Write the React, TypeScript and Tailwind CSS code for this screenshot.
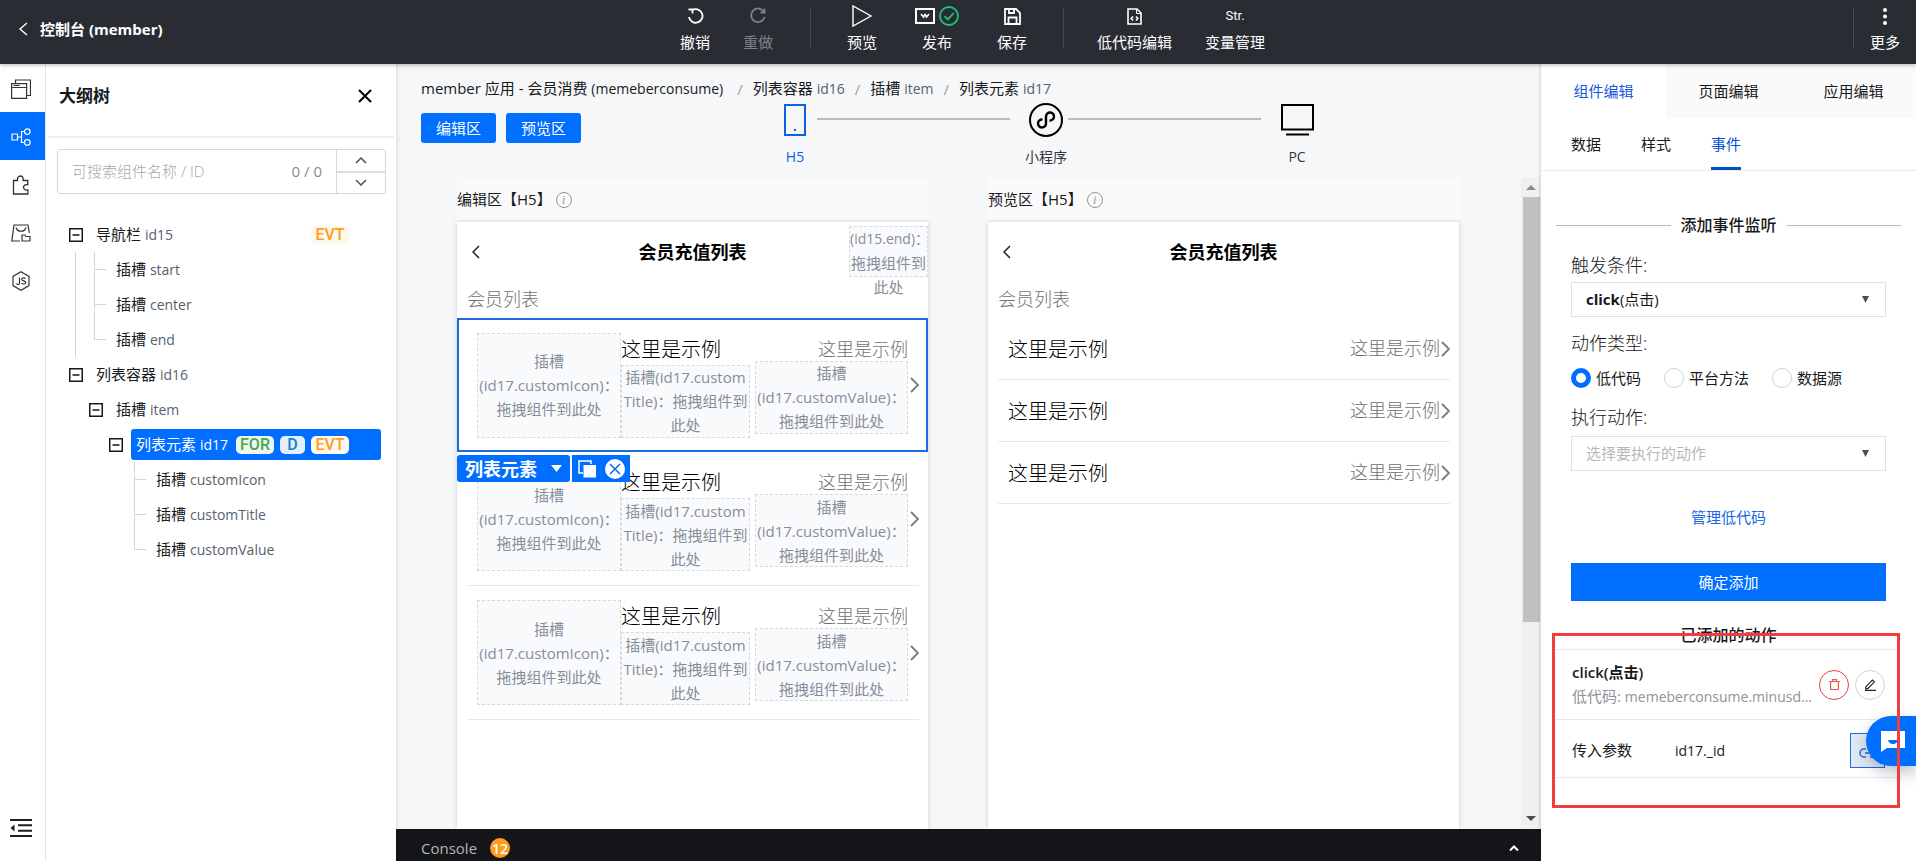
import React from 'react';
import clsx from 'clsx';

type GuideCell = 'blank' | 'line' | 'tee' | 'elbow' | 'toggle';

interface TreeRow {
  cells: GuideCell[];
  name: string;
  id: string;
  badges?: string[];
  selected?: boolean;
}

const TREE: TreeRow[] = [
  { cells: ['toggle'], name: '导航栏', id: 'id15', badges: ['EVT'] },
  { cells: ['line', 'tee'], name: '插槽', id: 'start' },
  { cells: ['line', 'tee'], name: '插槽', id: 'center' },
  { cells: ['line', 'elbow'], name: '插槽', id: 'end' },
  { cells: ['toggle'], name: '列表容器', id: 'id16' },
  { cells: ['blank', 'toggle'], name: '插槽', id: 'item' },
  { cells: ['blank', 'blank', 'toggle'], name: '列表元素', id: 'id17', badges: ['FOR', 'D', 'EVT'], selected: true },
  { cells: ['blank', 'blank', 'blank', 'tee'], name: '插槽', id: 'customIcon' },
  { cells: ['blank', 'blank', 'blank', 'tee'], name: '插槽', id: 'customTitle' },
  { cells: ['blank', 'blank', 'blank', 'elbow'], name: '插槽', id: 'customValue' },
];

const Svg: React.FC<React.SVGProps<SVGSVGElement>> = ({ children, ...props }) => (
  <svg fill="none" stroke="currentColor" strokeWidth="1.5" aria-hidden="true" {...props}>
    {children}
  </svg>
);

/* ---------- top bar ---------- */

interface ToolProps {
  label: string;
  className?: string;
  children: React.ReactNode;
}

const Tool: React.FC<ToolProps> = ({ label, className, children }) => (
  <button type="button" className={clsx('flex flex-col items-center text-[15px] leading-5', className)}>
    <span className="flex h-8 items-center justify-center gap-1">{children}</span>
    <span className="whitespace-nowrap">{label}</span>
  </button>
);

const TopBar: React.FC = () => (
  <header className="relative z-20 flex h-16 shrink-0 items-start bg-[#2a2c34] text-white shadow-[0_1px_4px_rgba(0,0,0,0.3)]">
    <a href="#console" className="flex w-[680px] items-center gap-3 pt-[19px] pl-[18px] text-[15px] leading-5 font-bold">
      <Svg width="10" height="14" viewBox="0 0 10 14" strokeWidth="1.4">
        <path d="M9 1 2 7l7 6" />
      </Svg>
      控制台 (member)
    </a>
    <Tool label="撤销">
      <Svg width="18" height="18" viewBox="0 0 18 18" strokeWidth="1.8">
        <path d="M2.5 2.5h4v4" />
        <path d="M6 3.2A6.8 6.8 0 1 1 3 10" />
      </Svg>
    </Tool>
    <Tool label="重做" className="ml-[33px] text-[#7f8187]">
      <Svg width="18" height="18" viewBox="0 0 18 18" strokeWidth="1.8">
        <path d="M15.5 1.5v4h-4" />
        <path d="M15 5A6.8 6.8 0 1 0 15.6 10" />
      </Svg>
    </Tool>
    <span className="mt-2 ml-[37px] h-10 w-px bg-[#44464e]" />
    <Tool label="预览" className="ml-9">
      <Svg width="20" height="22" viewBox="0 0 20 22" strokeWidth="1.4">
        <path d="M1 1v20l18-10z" />
      </Svg>
    </Tool>
    <Tool label="发布" className="ml-9 w-12">
      <Svg width="20" height="16" viewBox="0 0 20 16" strokeWidth="2">
        <path d="M1 1h18v14H1z" />
        <path d="M6 6l2.5 3L10 6.5 11.5 9 14 6" strokeWidth="1.6" />
      </Svg>
      <Svg width="20" height="20" viewBox="0 0 20 20" stroke="#1fc173" strokeWidth="1.8">
        <circle cx="10" cy="10" r="9" />
        <path d="M5.5 10.2l3.3 3.2 6-6.4" />
      </Svg>
    </Tool>
    <Tool label="保存" className="ml-9">
      <Svg width="17" height="17" viewBox="0 0 17 17" strokeWidth="1.8">
        <path d="M1 1h11l4 4v11H1z" />
        <path d="M4.5 16V9.500h8V16M5 1v4h5V1" />
      </Svg>
    </Tool>
    <span className="mt-2 ml-9 h-10 w-px bg-[#44464e]" />
    <Tool label="低代码编辑" className="ml-[33px]">
      <Svg width="15" height="17" viewBox="0 0 15 17" strokeWidth="1.6">
        <path d="M1 1h9l4 4v11H1z" />
        <path d="M9.500 1v4.500H14" strokeWidth="1" />
        <path d="M6 8.500 4.200 10.500 6 12.500M9 8.500l1.800 2L9 12.500" />
      </Svg>
    </Tool>
    <Tool label="变量管理" className="ml-[33px]">
      <span className="font-['Roboto',sans-serif] text-[13px]">Str.</span>
    </Tool>
    <span className="mt-2 ml-auto h-10 w-px bg-[#4b4d54]" />
    <Tool label="更多" className="mr-4 ml-4">
      <svg width="4" height="17" viewBox="0 0 4 17" fill="currentColor" aria-hidden="true">
        <circle cx="2" cy="2" r="2" />
        <circle cx="2" cy="8.500" r="2" />
        <circle cx="2" cy="15" r="2" />
      </svg>
    </Tool>
  </header>
);

/* ---------- left side ---------- */

const RailButton: React.FC<{ label: string; active?: boolean; children: React.ReactNode }> = ({
  label,
  active,
  children,
}) => (
  <button
    type="button"
    aria-label={label}
    className={clsx(
      'flex h-12 w-full items-center justify-center pt-[2px] pr-1',
      active ? 'bg-[#006eff] text-white' : 'text-[#2f3238]',
    )}
  >
    {children}
  </button>
);

const Rail: React.FC = () => (
  <nav className="flex w-[46px] shrink-0 flex-col border-r border-[#e4e6e9] bg-white">
    <RailButton label="页面">
      <Svg width="20" height="20" viewBox="0 0 20 20" strokeWidth="1.200">
        <path d="M4.500 4V1h15v15.500H16M.6 4.600h15v14.800H.6z" />
        <path d="M.6 8.500h15M2.500 6.500h6" />
      </Svg>
    </RailButton>
    <RailButton label="大纲树" active>
      <Svg width="20" height="18" viewBox="0 0 20 18" strokeWidth="1.200">
        <path d="M1 6h5.500v6H1zM6.500 9h4M13.500 3.500h-3v11h3" />
        <circle cx="16.300" cy="3.600" r="2.800" />
        <circle cx="16.300" cy="14.400" r="2.800" />
      </Svg>
    </RailButton>
    <RailButton label="组件">
      <Svg width="18" height="20" viewBox="0 0 18 20" strokeWidth="1.300">
        <path d="M1.500 5.500h4c-.3-2.800.8-4.500 2.800-4.500s3.200 1.700 2.900 4.500h4.600v4.200c-2.600-.4-4.300.7-4.300 2.600s1.700 3 4.300 2.700V19H1.500z" />
      </Svg>
    </RailButton>
    <RailButton label="资源">
      <Svg width="20" height="18" viewBox="0 0 20 18" strokeWidth="1.200">
        <path d="M9 17H.8L3 1h14l1.300 8M11 17v-6h3l1 1.500h4V17z" />
        <path d="M5 3.500c1.500 5 8.500 5 10 0" />
      </Svg>
    </RailButton>
    <RailButton label="脚本">
      <Svg width="18" height="20" viewBox="0 0 18 20" strokeWidth="1.200">
        <path d="M9 .8l8 4.600v9.200l-8 4.600-8-4.600V5.400z" />
        <path d="M7.500 6.500v5.700c0 1.500-2.500 1.600-3.500.3M13.500 7.600c-1-1.200-3.800-1-3.800.7 0 2 4 1 4 3.100 0 2-3.300 2-4.200.6" />
      </Svg>
    </RailButton>
    <button type="button" aria-label="收起" className="mt-auto mb-[23px] flex justify-center pr-1 text-[#1d1f24]">
      <Svg width="22" height="20" viewBox="0 0 22 20" strokeWidth="2">
        <path d="M0 2h22M8 7.300h14M8 12.700h14M0 18h22" />
        <path d="M4.500 6.500v7L.5 10z" fill="currentColor" stroke="none" />
      </Svg>
    </button>
  </nav>
);

const Guide: React.FC<{ kind: GuideCell }> = ({ kind }) => {
  if (kind === 'toggle') {
    return (
      <button type="button" aria-label="折叠" className="flex w-5 items-center justify-center text-[#17191d]">
        <Svg width="14" height="14" viewBox="0 0 14 14">
          <path d="M.75.75h12.500v12.500H.75zM3.500 7h7" />
        </Svg>
      </button>
    );
  }
  return (
    <span className="flex w-5">
      {kind !== 'blank' && (
        <span className={clsx('w-[10px] border-r border-[#d3d5d9]', kind === 'elbow' ? 'h-1/2' : 'h-full')} />
      )}
      {(kind === 'tee' || kind === 'elbow') && <span className="h-1/2 w-[11px] shrink-0 border-b border-[#d3d5d9]" />}
    </span>
  );
};

const badgeStyles: Record<string, string> = {
  FOR: 'w-[38px] bg-[#eef8ee] text-[#4ba552]',
  D: 'w-[25px] bg-[#e3f0fb] text-[#1a7fd0]',
  EVT: 'w-[38px] bg-[#fff8ec] text-[#ff9d1e]',
};

const Badge: React.FC<{ text: string }> = ({ text }) => (
  <span
    className={clsx(
      "flex h-[18px] items-center justify-center rounded-[5px] font-['Roboto',sans-serif] text-[16px] leading-4 font-medium",
      badgeStyles[text],
    )}
  >
    {text}
  </span>
);

const OutlinePanel: React.FC = () => (
  <aside className="flex w-[350px] shrink-0 flex-col bg-white">
    <div className="mx-[2px] flex h-[74px] items-center justify-between border-b-2 border-[#eff0f2] pr-[22px] pb-2 pl-[11px]">
      <h2 className="text-[17px] font-bold text-[#16181c]">大纲树</h2>
      <button type="button" aria-label="关闭" className="text-black">
        <Svg width="14" height="14" viewBox="0 0 14 14" strokeWidth="2">
          <path d="M1 1l12 12M13 1 1 13" />
        </Svg>
      </button>
    </div>
    <div className="mr-[10px] ml-[11px] mt-[11px] flex h-[45px] rounded-[3px] border border-[#d5d7db]">
      <input
        type="text"
        aria-label="可搜索组件名称 / ID"
        placeholder="可搜索组件名称 / ID"
        className="min-w-0 flex-1 pl-[14px] text-[15px] font-light outline-none placeholder:text-[#a4a8ae]"
      />
      <span className="flex items-center pr-[14px] text-[15px] text-[#888c92]">0 / 0</span>
      <div className="flex w-[49px] flex-col border-l border-[#d5d7db] text-[#4d5157]">
        <button type="button" aria-label="上一个" className="flex flex-1 items-center justify-center border-b-2 border-[#dcdee1]">
          <Svg width="12" height="7" viewBox="0 0 12 7">
            <path d="M1 6l5-5 5 5" />
          </Svg>
        </button>
        <button type="button" aria-label="下一个" className="flex flex-1 items-center justify-center">
          <Svg width="12" height="7" viewBox="0 0 12 7">
            <path d="M1 1l5 5 5-5" />
          </Svg>
        </button>
      </div>
    </div>
    <ul className="mt-[23px] pr-[15px] pl-5 text-[15px]">
      {TREE.map((row) => (
        <li key={row.name + row.id} className="flex h-[35px]">
          {row.cells.map((cell, i) => (
            <Guide key={i} kind={cell} />
          ))}
          <div
            className={clsx(
              'my-[2px] ml-[5px] flex flex-1 items-center rounded-[3px] pl-[5px]',
              row.selected ? 'bg-[#006eff] text-white' : 'text-[#17191d]',
            )}
          >
            <span className="whitespace-nowrap">
              {row.name}{' '}
              <span className={clsx('text-[14px]', row.selected ? 'text-white' : 'text-[#56616f]')}>{row.id}</span>
            </span>
            {row.badges && (
              <span className="mr-8 ml-auto flex gap-[6px]">
                {row.badges.map((b) => (
                  <Badge key={b} text={b} />
                ))}
              </span>
            )}
          </div>
        </li>
      ))}
    </ul>
  </aside>
);

/* ---------- canvas ---------- */

const Crumb: React.FC<{ name: string; id: string }> = ({ name, id }) => (
  <>
    <span className="text-[#9a9ea5]">/</span>
    <a href={'#' + id} className="text-[#17191d]">
      {name} <span className="text-[14px] text-[#56616f]">{id}</span>
    </a>
  </>
);

const Device: React.FC<{ label: string; className: string; children: React.ReactNode }> = ({
  label,
  className,
  children,
}) => (
  <button type="button" className={clsx('flex w-12 flex-col items-center text-[14px] leading-5', className)}>
    <span className="flex h-9 items-center">{children}</span>
    <span className="mt-[9px] whitespace-nowrap">{label}</span>
  </button>
);

const Slot: React.FC<{ lines: string[]; className: string }> = ({ lines, className }) => (
  <div
    className={clsx(
      'flex flex-col items-center justify-center border border-dashed border-[#d6d9de] bg-[#f9fafc] text-[15px] leading-6 whitespace-nowrap text-[#868e9a]',
      className,
    )}
  >
    {lines.map((line) => (
      <span key={line}>{line}</span>
    ))}
  </div>
);

const Chevron: React.FC = () => (
  <Svg width="9" height="16" viewBox="0 0 9 16" stroke="#7b7b7b" strokeWidth="1.800" className="shrink-0">
    <path d="M1 1l7 7-7 7" />
  </Svg>
);

const NavBar: React.FC = () => (
  <div className="flex h-[60px] items-center px-[15px]">
    <button type="button" aria-label="返回" className="w-2 text-[#222]">
      <Svg width="8" height="14" viewBox="0 0 8 14">
        <path d="M7 1 1 7l6 6" />
      </Svg>
    </button>
    <h3 className="flex-1 pr-2 text-center text-[18px] leading-6 font-bold text-black">会员充值列表</h3>
  </div>
);

const ListHeading: React.FC = () => (
  <p className="pt-[5px] pb-[7px] pl-[10px] text-[18px] leading-6 font-light text-[#707070]">会员列表</p>
);

const EditItem: React.FC<{ selected?: boolean }> = ({ selected }) => (
  <div className={clsx('relative', selected && 'z-10')}>
    {selected && <div className="pointer-events-none absolute inset-0 border-2 border-[#1a6be0]" />}
    <div
      className={clsx('mr-[9px] ml-[10px] flex h-[134px] items-center pl-[10px]', !selected && 'border-b border-[#e8e8e8]')}
    >
      <Slot className="h-[105px] w-[144px]" lines={['插槽', '(id17.customIcon)：', '拖拽组件到此处']} />
      <div className="w-[129px]">
        <p className="pt-[2px] text-[20px] leading-[30px] font-light text-black">这里是示例</p>
        <Slot className="h-[73px]" lines={['插槽(id17.custom', 'Title)：拖拽组件到', '此处']} />
      </div>
      <div className="mr-[2px] ml-[5px] w-[153px]">
        <p className="text-right text-[18px] leading-6 font-light text-[#707070]">这里是示例</p>
        <Slot className="h-[73px]" lines={['插槽', '(id17.customValue)：', '拖拽组件到此处']} />
      </div>
      <Chevron />
    </div>
    {selected && (
      <div className="absolute top-full left-0 mt-[3px] flex gap-[2px] text-white">
        <button type="button" className="flex h-[27px] w-[113px] items-center justify-between rounded-[3px] bg-[#006eff] px-2 text-[18px] leading-6 font-bold">
          列表元素
          <svg width="11" height="7" viewBox="0 0 11 7" fill="currentColor" aria-hidden="true">
            <path d="M0 0h11L5.500 7z" />
          </svg>
        </button>
        <div className="flex h-[27px] w-[58px] items-center justify-center gap-2 bg-[#006eff]">
          <button type="button" aria-label="复制">
            <Svg width="19" height="18" viewBox="0 0 19 18">
              <path d="M5 13H1V1h12v3" />
              <path d="M5.500 5H18v12.500H5.500z" fill="currentColor" stroke="none" />
            </Svg>
          </button>
          <button type="button" aria-label="删除">
            <Svg width="20" height="20" viewBox="0 0 20 20">
              <circle cx="10" cy="10" r="10" fill="currentColor" stroke="none" />
              <path d="M5 5l10 10M15 5 5 15" stroke="#006eff" />
            </Svg>
          </button>
        </div>
      </div>
    )}
  </div>
);

const Screen: React.FC<{ title: string; children: React.ReactNode }> = ({ title, children }) => (
  <section className="flex w-[471px] shrink-0 flex-col">
    <div className="flex h-[42px] items-center gap-1 bg-[#fafafa] pt-px text-[15px] text-[#17191d]">
      <h3>{title}</h3>
      <span className="flex h-4 w-4 items-center justify-center rounded-full border border-[#8f9399] font-['Liberation_Serif',serif] text-[12px] leading-3 text-[#8f9399] italic">
        i
      </span>
    </div>
    <div className="mt-[2px] flex-1 overflow-hidden bg-white shadow-[0_0_5px_rgba(0,0,0,0.16)]">{children}</div>
  </section>
);

const Canvas: React.FC = () => (
  <main className="flex min-w-0 flex-1 flex-col bg-[#f5f7f9] shadow-[inset_3px_0_4px_-2px_rgba(0,0,0,0.12)]">
    <div className="flex items-center gap-[10px] pt-3 pl-[25px] text-[15px] leading-6 whitespace-nowrap">
      <a href="#member" className="mr-1 text-[#17191d]">
        member 应用 - 会员消费 <span className="text-[14px]">(memeberconsume)</span>
      </a>
      <Crumb name="列表容器" id="id16" />
      <Crumb name="插槽" id="item" />
      <Crumb name="列表元素" id="id17" />
    </div>
    <div className="flex h-[76px] shrink-0 pl-[25px]">
      <div className="flex gap-[10px] pt-3 text-[15px] text-white">
        <button type="button" className="h-[30px] w-[75px] rounded-[3px] bg-[#006eff]">编辑区</button>
        <button type="button" className="h-[30px] w-[75px] rounded-[3px] bg-[#006eff]">预览区</button>
      </div>
      <div className="ml-[190px] flex items-start pt-px">
        <Device label="H5" className="text-[#0a63e6]">
          <Svg width="22" height="32" viewBox="0 0 22 32" strokeWidth="2">
            <path d="M1 1h20v30H1z" />
            <path d="M10 25h2v2h-2z" fill="currentColor" stroke="none" />
          </Svg>
        </Device>
        <span className="mt-4 mr-3 ml-[-2px] h-[2px] w-[193px] bg-[#b9bbbe]" />
        <Device label="小程序" className="text-[#33363b]">
          <Svg width="34" height="34" viewBox="0 0 34 34" stroke="#000" strokeWidth="2">
            <circle cx="17" cy="17" r="16" />
            <path d="M13.500 16.500a4 4 0 1 0 3.500 4v-7a4 4 0 1 1 3.500 4" strokeWidth="2.400" />
          </Svg>
        </Device>
        <span className="mt-4 mr-3 ml-[-2px] h-[2px] w-[193px] bg-[#b9bbbe]" />
        <Device label="PC" className="text-[#33363b]">
          <Svg width="33" height="32" viewBox="0 0 33 32" stroke="#000" strokeWidth="2">
            <path d="M1 1h31v24.500H1zM5 30.500h23" />
          </Svg>
        </Device>
      </div>
    </div>
    <div className="flex min-h-0 flex-1 justify-between">
      <div className="flex min-w-0 flex-1 gap-[60px] overflow-hidden pt-px pl-[61px]">
        <Screen title="编辑区【H5】">
          <div className="relative">
            <NavBar />
            <div className="absolute top-1 right-0 h-[51px] w-[79px] border border-dashed border-[#d6d9de] bg-[#f9fafc] text-center text-[15px] leading-6 text-[#868e9a]">
              <span className="block text-[14px] whitespace-nowrap">(id15.end)：</span>
              <span className="block whitespace-nowrap">拖拽组件到</span>
              <span className="block">此处</span>
            </div>
          </div>
          <ListHeading />
          <EditItem selected />
          <EditItem />
          <EditItem />
        </Screen>
        <Screen title="预览区【H5】">
          <NavBar />
          <ListHeading />
          {[1, 2, 3].map((n) => (
            <div key={n} className="mr-[9px] ml-[10px] flex h-[62px] items-center border-b border-[#e8e8e8] pl-[10px]">
              <span className="flex-1 pt-[2px] text-[20px] leading-8 font-light text-black">这里是示例</span>
              <span className="mr-px pb-[2px] text-[18px] leading-6 font-light text-[#707070]">这里是示例</span>
              <Chevron />
            </div>
          ))}
        </Screen>
      </div>
      <div className="flex w-[20px] shrink-0 flex-col items-center bg-[#f0f0f1]">
        <svg width="10" height="20" viewBox="0 0 10 20" fill="#8c8c8c" aria-hidden="true">
          <path d="M0 13h10L5 8z" />
        </svg>
        <span className="h-[425px] w-[17px] bg-[#c1c1c1]" />
        <svg width="10" height="20" viewBox="0 0 10 20" fill="#4c4c4c" className="mt-auto" aria-hidden="true">
          <path d="M0 7h10l-5 5z" />
        </svg>
      </div>
    </div>
    <footer className="flex h-8 shrink-0 items-center bg-[#141518] pt-[6px] pr-[22px] pl-[25px] text-[15px] text-[#b3b5b9]">
      Console
      <span className="ml-[13px] flex h-5 w-5 items-center justify-center rounded-full bg-[#ff9d1e] text-[14px] font-semibold text-white">
        12
      </span>
      <button type="button" aria-label="展开" className="ml-auto text-white">
        <Svg width="10" height="6" viewBox="0 0 10 6" strokeWidth="2">
          <path d="M1 5.500l4-4 4 4" />
        </Svg>
      </button>
    </footer>
  </main>
);

/* ---------- right side ---------- */

const SelectCaret: React.FC = () => (
  <svg width="7" height="7" viewBox="0 0 7 7" fill="#4b4e54" className="pointer-events-none absolute right-[17px]" aria-hidden="true">
    <path d="M0 0h7L3.500 7z" />
  </svg>
);

const selectClass = 'h-[35px] w-full appearance-none border border-[#dfe1e4] bg-white pl-[14px] text-[15px] outline-none';
const fieldLabelClass = 'text-[18px] leading-7 font-light';

const Radio: React.FC<{ label: string; checked?: boolean }> = ({ label, checked }) => (
  <label className="flex items-center gap-[5px] text-[15px] leading-5">
    <input
      type="radio"
      name="action-type"
      defaultChecked={checked}
      className="h-5 w-5 appearance-none rounded-full border border-[#cfd2d6] bg-white checked:border-[5px] checked:border-[#006eff]"
    />
    {label}
  </label>
);

const EventPanel: React.FC = () => (
  <aside className="relative z-10 flex w-[375px] shrink-0 flex-col bg-white text-[15px] text-[#17191d] shadow-[-1px_0_3px_rgba(0,0,0,0.15)]">
    <div className="flex h-[54px] bg-[#fafafa]">
      <button type="button" className="flex-1 bg-white text-[#1556dd]">组件编辑</button>
      <button type="button" className="flex-1">页面编辑</button>
      <button type="button" className="flex-1">应用编辑</button>
    </div>
    <div className="flex h-[53px] gap-10 border-b border-[#e8eaec] pl-[30px]">
      <button type="button">数据</button>
      <button type="button">样式</button>
      <button type="button" className="border-y-[3px] border-t-transparent border-b-[#0052c8] text-[#0052d9]">事件</button>
    </div>

    <h3 className="mx-[15px] mt-[42px] flex items-center gap-[10px] text-[16px] leading-6 font-medium">
      <span className="h-px flex-1 bg-[#b9bbbe]" />
      添加事件监听
      <span className="h-px flex-1 bg-[#b9bbbe]" />
    </h3>
    <form className="flex flex-col px-[30px]" onSubmit={(e) => e.preventDefault()}>
      <label htmlFor="trigger" className={clsx('mt-[14px] h-[31px]', fieldLabelClass)}>触发条件:</label>
      <div className="relative flex items-center">
        <select id="trigger" className={clsx(selectClass, 'text-transparent')}>
          <option>click(点击)</option>
        </select>
        <span className="pointer-events-none absolute left-[15px]" aria-hidden="true">
          <b>click</b>(点击)
        </span>
        <SelectCaret />
      </div>
      <fieldset>
        <legend className={clsx('pt-3', fieldLabelClass)}>动作类型:</legend>
        <div className="mt-[11px] flex justify-start gap-[23px]">
          <Radio label="低代码" checked />
          <Radio label="平台方法" />
          <Radio label="数据源" />
        </div>
      </fieldset>
      <label htmlFor="action" className={clsx('mt-[15px] h-[33px]', fieldLabelClass)}>执行动作:</label>
      <div className="relative flex items-center">
        <select id="action" className={clsx(selectClass, 'text-[#b4b8be]')}>
          <option>选择要执行的动作</option>
        </select>
        <SelectCaret />
      </div>
      <a href="#lowcode" className="mt-9 self-center leading-5 text-[#1467e8]">管理低代码</a>
      <button type="submit" className="mt-9 h-[38px] bg-[#006eff] text-white">确定添加</button>
    </form>

    <div className="relative mt-[22px] pb-6">
      <h3 className="text-center text-[16px] leading-6 font-medium">已添加的动作</h3>
      <div className="mx-[15px] mt-[2px] border-t border-[#e8eaec]">
        <div className="flex h-[70px] items-center border-b border-[#e8eaec] pr-4 pl-4">
          <div className="min-w-0 flex-1 leading-6 whitespace-nowrap">
            <p className="font-semibold">click(点击)</p>
            <p className="text-[#8f9297]">
              低代码: <span className="text-[14px]">memeberconsume.minusd...</span>
            </p>
          </div>
          <button type="button" aria-label="删除" className="flex h-[30px] w-[30px] shrink-0 items-center justify-center rounded-full border border-[#e8403f] text-[#ee5a58]">
            <Svg width="11" height="11" viewBox="0 0 11 11" strokeWidth="1.200">
              <path d="M0 2.500h11M1.600 2.500v8h7.800v-8M3.500 2V.6h4V2" />
            </Svg>
          </button>
          <button type="button" aria-label="编辑" className="ml-[6px] flex h-[30px] w-[30px] shrink-0 items-center justify-center rounded-full border border-[#d0d2d6] text-[#222]">
            <Svg width="12" height="12" viewBox="0 0 12 12" strokeWidth="1.200">
              <path d="M1 11.400h11M2 7.600 8.400 1.200l1.900 1.900L4 9.400l-2.200.3z" />
            </Svg>
          </button>
        </div>
        <div className="flex h-[58px] items-center border-b border-[#e8eaec] pt-1 pr-4 pl-4">
          <span className="w-[103px]">传入参数</span>
          <span className="flex-1 text-[14px]">id17._id</span>
          <button type="button" aria-label="绑定变量" className="flex h-[35px] w-[35px] items-center justify-center border border-[#1a6be0] bg-[#e4ebf5] pt-1 text-[#2a62d8]">
            <Svg width="18" height="10" viewBox="0 0 18 10">
              <path d="M7 1H5a4 4 0 0 0 0 8h2M11 1h2a4 4 0 0 1 0 8h-2M6 5h6" />
            </Svg>
          </button>
        </div>
      </div>
      {/* floating support entry */}
      <button
        type="button"
        aria-label="在线客服"
        className="absolute top-[93px] right-0 flex h-[50px] w-[50px] items-center justify-center rounded-l-full bg-[#006eff] pl-1 text-white shadow-[0_6px_16px_rgba(30,40,80,0.3)]"
      >
        <Svg width="24" height="21" viewBox="0 0 24 21" stroke="none">
          <path d="M0 0h24v17H6l-6 4z" fill="currentColor" />
          <path d="M7 9h10c-1 5.500-9 5.500-10 0z" fill="#006eff" />
        </Svg>
      </button>
      <div className="pointer-events-none absolute inset-x-[11px] top-[10px] mr-[5px] h-[175px] border-[3px] border-[#f03e3e]" />
    </div>
  </aside>
);

const App: React.FC = () => (
  <div className="flex h-screen flex-col overflow-hidden bg-white font-['Open_Sans','Noto_Sans_CJK_SC',sans-serif] text-[#17191d]">
    <TopBar />
    <div className="flex min-h-0 flex-1">
      <Rail />
      <OutlinePanel />
      <Canvas />
      <EventPanel />
    </div>
  </div>
);

export default App;
